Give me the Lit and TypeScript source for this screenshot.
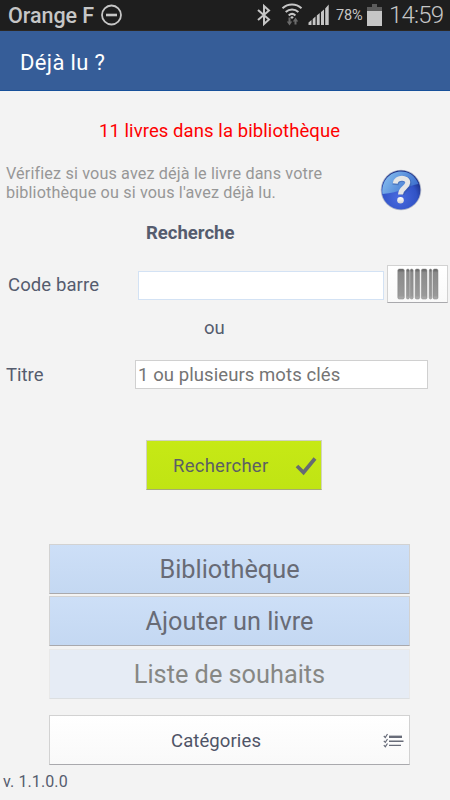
import { LitElement, html, css, svg } from "lit";
import { customElement } from "lit/decorators.js";

const bars: [number, number][] = [[0, 6.5], [8.6, 3], [12.4, 3], [17.4, 4.4], [23.6, 5.6], [31.4, 2.6], [35.2, 5]];

@customElement("app-root")
export class AppRoot extends LitElement {
  static styles = css`
    :host {
      display: flex;
      flex-direction: column;
      width: 450px;
      height: 800px;
      overflow: hidden;
      background: #f3f3f3;
      color: #555c6e;
      font-family: Roboto, "Liberation Sans", sans-serif;
      font-size: 18.5px;
      white-space: nowrap;
    }
    * { box-sizing: border-box; }
    svg { display: block; flex: none; }
    .status {
      display: flex;
      align-items: center;
      height: 31px;
      padding: 0 7px 0 8px;
      background: #1e1e1e;
      border-bottom: 1px solid #2b2723;
      color: #c6c6c6;
    }
    .carrier { width: 93px; font-size: 21.5px; font-weight: 500; letter-spacing: -0.05px; }
    .tray { margin-left: auto; display: flex; align-items: center; }
    .percent { width: 31px; margin: 1px 0 0 4px; font-size: 14.5px; letter-spacing: -0.1px; }
    .clock { width: 54px; margin-left: 7px; font-size: 24px; font-weight: 300; letter-spacing: -0.8px; }
    header {
      display: flex;
      align-items: center;
      height: 60px;
      padding: 3px 0 0 20px;
      background: #365d98;
      border-bottom: 1px solid #17509a;
      color: #fff;
      font-size: 22px;
      letter-spacing: 0.35px;
    }
    .count {
      height: 73px;
      padding: 7px 11px 0 0;
      display: flex;
      align-items: center;
      justify-content: center;
      color: #fe0000;
      letter-spacing: 0.08px;
    }
    .about { display: flex; height: 49px; padding-left: 6px; }
    .about p { width: 374px; margin: 0; font-size: 16.2px; line-height: 19px; color: #979797; letter-spacing: 0.14px; }
    .about svg { margin-top: 5px; }
    h2 { height: 39px; margin: 0; padding-left: 146px; font-size: 18.5px; font-weight: 700; line-height: 40px; }
    .field { display: flex; align-items: center; }
    .code { height: 64px; padding-left: 8px; }
    .code label { width: 129.500px; padding-top: 2px; letter-spacing: 0.1px; }
    .code input { width: 246px; border: 1px solid #d3e2f4; margin-top: 3px; }
    input { height: 29px; padding: 0 2px; background: #fff; border-radius: 0; font: inherit; outline: 0; }
    .scan { width: 61px; height: 38px; margin-left: 3.500px; display: grid; place-items: center; padding: 0; }
    .or { height: 24px; line-height: 25px; padding-left: 204px; }
    .title { height: 69px; padding-left: 6px; }
    .title label { width: 129px; padding-top: 1px; }
    .title input { width: 293px; padding-top: 1px; border: 1px solid #d0d0d0; letter-spacing: 0.08px; }
    input::placeholder { color: #747474; opacity: 1; }
    button {
      border: 1px solid #d2d2d2;
      border-bottom: 1px solid #a9a9ad;
      border-radius: 0;
      background: linear-gradient(#fff, #f9f9f9);
      color: inherit;
      font: inherit;
    }
    .search {
      width: 176px;
      height: 50px;
      margin: 31px 0 0 146px;
      padding: 1px 4px 0 26px;
      display: flex;
      align-items: center;
      justify-content: space-between;
      background: linear-gradient(#c6e915, #c0e414);
      border-color: #d0d2c0 #d0d2c0 #a5ab75;
      color: #5c5f63;
      letter-spacing: 0.25px;
    }
    nav { display: flex; flex-direction: column; margin: 54px 40px 0 49px; }
    nav button { height: 50px; padding: 1px 0 0; font-size: 25.3px; }
    .entry { background: linear-gradient(#cddff7, #c4d8f2); color: #686b76; margin-bottom: 2px; }
    .entry + .entry { margin-bottom: 3px; }
    nav .entry.muted { background: #e6ecf5; color: #868784; border-color: #e9e9e9 #e9e9e9 #dcdfe1; margin-bottom: 16px; }
    nav .categories {
      display: flex;
      align-items: center;
      padding: 1px 5px 0 121px;
      justify-content: space-between;
      font-size: 18.5px;
      letter-spacing: 0.1px;
      color: #4f5467;
    }
    footer { padding-left: 3px; font-size: 16px; line-height: 34px; letter-spacing: 0.1px; }
  `;

  private statusBar() {
    return html`<div class="status">
      <span class="carrier">Orange F</span>
      <svg width="22" height="22" viewBox="0 0 22 22" fill="none" stroke="#c6c6c6" stroke-width="1.8">
        <circle cx="10.5" cy="11" r="9.5" /><path d="M5 11h11" stroke-width="2.6" />
      </svg>
      <div class="tray">
        <svg width="79" height="30" viewBox="253 0 79 30">
          <path d="M258 10l11 9.500-5 4.500V6l5 4.500-11 9.500" fill="none" stroke="#c6c6c6" stroke-width="2" />
          <g fill="none" stroke="#c6c6c6" stroke-width="2">
            <path d="M282.500 8.300c5.500-5 13.500-5 19 0M285.700 12c3.700-3.400 9-3.400 12.700 0M288.700 15.500c2-1.900 4.700-1.900 6.700 0" />
          </g>
          <path d="M290.200 17.200a2.600 2.600 0 0 1 3.600 0l-1.800 1.800z" fill="#c6c6c6" />
          <path d="M289.500 17.500v5M295.500 24.500v-4" stroke="#6b6b6b" stroke-width="2" />
          <path d="M286.800 21.500h5.400l-2.700 4zM292.800 21.500h5.400l-2.700-4z" fill="#6b6b6b" />
          <path d="M308.500 25v-2.500l3-2.500v5zM312.700 25v-6l2.800-2.500V25zM316.800 25v-9.500l2.900-2.500V25zM321 25V12l3-2.500V25zM325.200 25V8.500l3.500-4V25z" fill="#c6c6c6" />
        </svg>
        <span class="percent">78%</span>
        <svg width="15" height="22" viewBox="0 0 15 22">
          <path d="M5 0h5v3h5v5H0V3h5z" fill="#5c5c5c" /><path d="M0 7h15v15H0z" fill="#c6c6c6" />
        </svg>
        <span class="clock">14:59</span>
      </div>
    </div>`;
  }

  private helpIcon() {
    return html`<svg width="42" height="42" viewBox="0 0 42 42">
      <defs>
        <radialGradient id="ball" cx=".45" cy=".7" r=".65">
          <stop offset="0" stop-color="#4a6be0" /><stop offset=".7" stop-color="#3153c6" /><stop offset="1" stop-color="#1c2f85" />
        </radialGradient>
        <linearGradient id="gloss" x2="1" y2=".4">
          <stop offset="0" stop-color="#8cc4f2" /><stop offset="1" stop-color="#3f72cf" />
        </linearGradient>
        <linearGradient id="mark" x2="0" y2="1"><stop offset="0" stop-color="#fff" /><stop offset="1" stop-color="#d2d2d2" /></linearGradient>
      </defs>
      <circle cx="21" cy="21" r="20.300" fill="#b3b9cb" />
      <circle cx="21" cy="21" r="19.400" fill="url(#ball)" />
      <path d="M2.500 25C1 12 10 2.600 21 2.600c8 0 14 4 17.500 12.400C29 16 20 24 2.500 25z" fill="url(#gloss)" />
      <path d="M15.500 16c.4-8.500 13.400-8 12.900-1.200-.3 5.200-7 5.200-7.200 11.200" fill="none" stroke="#34519b" stroke-width="6" opacity=".45" />
      <path d="M15.200 14.500c.6-7 13-6.700 12.500-.8-.4 5-7 5-7.200 11.800" fill="none" stroke="#e6e6e6" stroke-width="5" />
      <circle cx="20.500" cy="31.300" r="3.300" fill="url(#mark)" />
    </svg>`;
  }

  private barcodeIcon() {
    return html`<svg width="42" height="32" viewBox="0 0 42 32">
      <defs><linearGradient id="bar" x2="0" y2="1"><stop offset="0" stop-color="#5d5d5d" /><stop offset=".12" stop-color="#8a8a8a" /><stop offset=".88" stop-color="#999" /><stop offset="1" stop-color="#b0b0b0" /></linearGradient></defs>
      ${bars.map(([x, w]) => svg`<rect x=${x + 0.8} y="1" width=${w} height="30" rx="1.500" fill="url(#bar)" stroke="#858585" stroke-width=".5" />`)}
    </svg>`;
  }

  render() {
    return html`
      ${this.statusBar()}
      <header>Déjà lu ?</header>
      <div class="count">11 livres dans la bibliothèque</div>
      <div class="about">
        <p>Vérifiez si vous avez déjà le livre dans votre<br />bibliothèque ou si vous l'avez déjà lu.</p>
        ${this.helpIcon()}
      </div>
      <h2>Recherche</h2>
      <div class="field code">
        <label for="code">Code barre</label><input id="code" />
        <button class="scan" aria-label="Scanner">${this.barcodeIcon()}</button>
      </div>
      <div class="or">ou</div>
      <div class="field title">
        <label for="titre">Titre</label><input id="titre" placeholder="1 ou plusieurs mots clés" />
      </div>
      <button class="search">
        Rechercher
        <svg width="22" height="20" viewBox="0 0 22 20"><path d="M2 10l6.500 6.500L20 2.500" fill="none" stroke="#666b72" stroke-width="3.700" /></svg>
      </button>
      <nav>
        <button class="entry">Bibliothèque</button>
        <button class="entry">Ajouter un livre</button>
        <button class="entry muted">Liste de souhaits</button>
        <button class="categories">
          Catégories
          <svg width="21" height="16" viewBox="0 0 21 16" fill="none" stroke="#686c79">
            <path d="M6 3.800h13" stroke-width="2.400" /><path d="M6 8.300h14.500M6 12.400h12" stroke-width="1.400" />
            <path d="M.8 3l1.500 1.500L4.500 1M.8 7.800l1.500 1.500L4.500 6M.8 12.200l1.500 1.500L4.500 10.500" stroke-width="1.200" />
          </svg>
        </button>
      </nav>
      <footer>v. 1.1.0.0</footer>
    `;
  }
}
